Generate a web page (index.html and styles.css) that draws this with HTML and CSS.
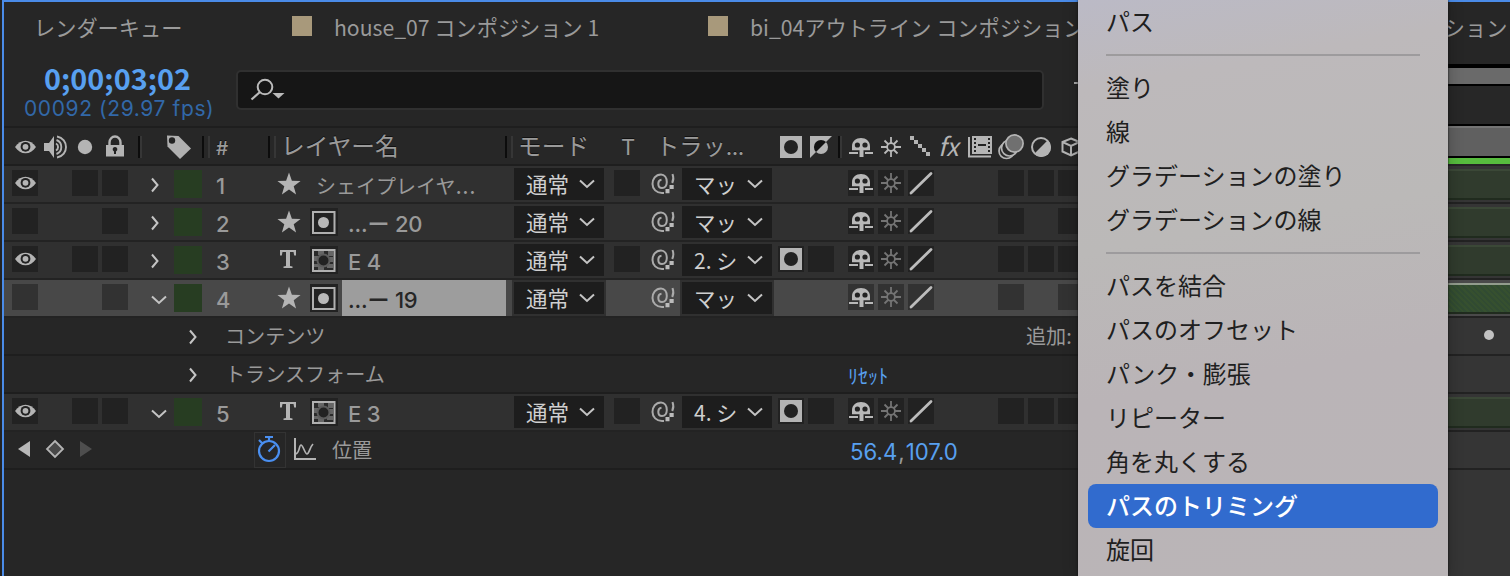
FILE: index.html
```
<!DOCTYPE html>
<html lang="ja">
<head>
  <meta charset="UTF-8" />
  <meta name="viewport" content="width=device-width, initial-scale=1.0" />
  <title>タイムライン</title>
  <link rel="stylesheet" href="styles.css">
</head>
<body>
  <!-- icons -->
  <svg class="defs" width="0" height="0">
    <symbol id="eye" viewBox="0 0 26 26">
      <path d="M3 13C6 8.800 9.500 6.700 13.500 6.700S21 8.800 24 13c-3 4.200-6.500 6.300-10.500 6.300S6 17.200 3 13z" fill="#b4b4b4"/>
      <circle cx="13.500" cy="12.800" r="4.900" fill="#222"/>
      <circle cx="13.500" cy="12.800" r="2.900" fill="#b4b4b4"/>
    </symbol>
    <symbol id="shy" viewBox="0 0 26 26">
      <path d="M4 16.300V12.500C4 7 8 4 13 4s9 3 9 8.500v3.800h-6.500V23h-4v-6.700z" fill="#b8b8b8"/>
      <circle cx="9.400" cy="11" r="2.600" fill="#222"/><circle cx="17" cy="11" r="2.600" fill="#222"/>
      <path d="M1 19h9M17 19h8" stroke="#b8b8b8" stroke-width="2"/>
    </symbol>
    <symbol id="sun" viewBox="0 0 26 26">
      <circle cx="13" cy="13" r="3.900"/>
      <path d="M13 3v6M13 17v6M3 13h6M17 13h6M6.500 6.500l3.500 3.500M16 16l3.500 3.500M19.500 6.500L16 10M10 16l-3.500 3.500"/>
    </symbol>
    <symbol id="slash" viewBox="0 0 26 26">
      <path d="M3 23L23 3.500" stroke="#bcbcbc" stroke-width="2.800" stroke-linecap="round"/>
    </symbol>
    <symbol id="whip" viewBox="0 0 26 26">
      <path d="M11.500 9.800C9.500 10 8.300 11.800 8.300 13.700c0 2.500 1.500 4.300 3.700 4.300 3 0 4.800-2.600 4.800-6C16.800 7.800 14.500 4.500 11 4.500 5.500 4.500 2.500 9.300 2.500 14c0 5 4 9 9.500 9h2M22.500 4c1.200 3 1.100 6-.3 9" fill="none" stroke="#aaa" stroke-width="2"/>
      <path d="M15.500 19h4v4.200h-4zM19.500 15h4.200v4h-4.200z" fill="#bbb"/>
    </symbol>
    <symbol id="right" viewBox="0 0 12 18"><path d="M3 2.500L8.500 9 3 15.500" fill="none" stroke="#c4c4c4" stroke-width="2"/></symbol>
    <symbol id="down" viewBox="0 0 18 12"><path d="M2 2.500L9 9l7-6.500" fill="none" stroke="#c4c4c4" stroke-width="2"/></symbol>
    <symbol id="star" viewBox="0 0 24 24"><path d="M12 .5l2.900 8.200 8.700.2-6.900 5.300 2.400 8.300L12 17.600l-7.100 4.900 2.400-8.300L.4 8.900l8.700-.2z" fill="#b4b4b4"/></symbol>
    <symbol id="text" viewBox="0 0 18 20"><path d="M1 1h16v5.500h-1.800L14.500 3H11v14l2.500.6V19h-9v-1.400L7 17V3H3.500l-.7 3.500H1z" fill="#b4b4b4"/></symbol>
    <symbol id="shape-matte" viewBox="0 0 28 28">
      <rect width="28" height="28" fill="#222"/><rect x="3" y="4" width="21.500" height="21" fill="#222" stroke="#b0b0b0" stroke-width="2"/>
      <circle cx="13.500" cy="14.500" r="5.500" fill="#b8b8b8"/>
    </symbol>
    <symbol id="text-matte" viewBox="0 0 28 28">
      <rect width="28" height="28" fill="#222"/><rect x="3" y="4" width="21.500" height="21" fill="#2a2a2a" stroke="#b0b0b0" stroke-width="2"/>
      <path d="M8 5h6v4H8zM18 5h5v5h-5zM4 10h5v5H4zM18 11h5v5h-5zM8 19h6v5H8zM17 18h6v4h-6zM4 18h5v3H4z" fill="#666"/>
      <circle cx="13.500" cy="14.500" r="6" fill="#222" stroke="#5c5c5c" stroke-width="2"/>
    </symbol>
    <symbol id="matte" viewBox="0 0 26 26"><path d="M2 2h22v22H2z" fill="#b4b4b4"/><circle cx="13" cy="13" r="7" fill="#222"/></symbol>
  </svg>

  <div class="app">
    <div class="tabs">
      <span class="tab queue">レンダーキュー</span>
      <span class="tab comp-1"><i></i>house_07 コンポジション 1</span>
      <span class="tab comp-2"><i></i>bi_04アウトライン コンポジション 1</span>
      <span class="tab comp-3">コンポジション</span>
    </div>

    <div class="main">
      <div class="layers">
        <div class="toolbar">
          <div class="time">
            <b>0;00;03;02</b>
            <span>00092 (29.97 fps)</span>
          </div>
          <div class="search">
            <svg width="36" height="26" viewBox="0 0 36 26"><circle cx="15" cy="9" r="7.300" fill="none" stroke="#bbb" stroke-width="2"/><path d="M10 14L1.500 21.500" stroke="#bbb" stroke-width="2.200"/><path d="M22.500 15h12L28.500 20.500z" fill="#bbb"/></svg>
          </div>
          <div class="flow-icon"></div>
        </div>

        <div class="row head">
          <svg class="icon"><use href="#eye"/></svg>
          <svg class="icon" viewBox="0 0 26 26"><path d="M2 9h5l5-7v22l-5-7H2z" fill="#b4b4b4"/><path d="M14 9.500a4 4 0 0 1 0 7M15 2.500c12 2 12 19 0 21M14.500 6a7.500 7.500 0 0 1 0 14" fill="none" stroke="#b4b4b4" stroke-width="1.900"/></svg>
          <svg class="icon" viewBox="0 0 26 26"><circle cx="13" cy="13" r="7.200" fill="#b4b4b4"/></svg>
          <svg class="icon" viewBox="0 0 26 26"><path d="M7.500 12V8.500a5.500 6 0 0 1 11 0V12" fill="none" stroke="#b4b4b4" stroke-width="2.400"/><path d="M4 11h18v11.500H4z" fill="#b4b4b4"/><path d="M13 13a2.300 2.300 0 0 0-1 4.400V20h2v-2.600A2.300 2.300 0 0 0 13 13z" fill="#222"/></svg>
          <span class="rule"></span>
          <svg class="tag" viewBox="0 0 26 26"><path d="M1 1.500L12.500 2 25 14.500 14 25 1.500 12.500z" fill="#b0b0b0"/><circle cx="6" cy="6.500" r="3.200" fill="#222"/></svg>
          <span class="hash">#</span>
          <span class="label name-label">レイヤー名</span>
          <span class="label mode-label">モード</span>
          <span class="label t-label">T</span>
          <span class="label track-label">トラッ<small>...</small></span>
          <svg class="icon"><use href="#matte"/></svg>
          <svg class="icon" viewBox="0 0 26 26"><path d="M2 2h22L2 24z" fill="#b4b4b4"/><circle cx="13" cy="13" r="7" fill="#b4b4b4"/><path d="M18 8A7 7 0 0 0 8 18z" fill="#111"/></svg>
          <span class="rule short"></span>
          <svg class="icon"><use href="#shy"/></svg>
          <svg class="icon sun bright"><use href="#sun"/></svg>
          <svg class="icon" viewBox="0 0 26 26"><path d="M2 2h4v4H2zM6 6h4v4H6zM10 10h4v4h-4zM14 14h4v4h-4zM18 18h4v4h-4z" fill="#b4b4b4"/></svg>
          <span class="fx">fx</span>
          <svg class="icon" viewBox="0 0 26 26"><path d="M1 3v19.500h22" fill="none" stroke="#b4b4b4" stroke-width="2"/><path d="M4 2h20v18H4z" fill="#b4b4b4"/><path d="M7 4v15M21 4v15" stroke="#222" stroke-width="2" stroke-dasharray="2 2"/><path d="M10 11h8" fill="none" stroke="#222" stroke-width="2"/></svg>
          <svg class="icon" viewBox="0 0 26 26"><g fill="#292929" stroke="#b4b4b4" stroke-width="1.700"><circle cx="8.500" cy="17" r="7.500"/><circle cx="11.500" cy="14" r="8"/><circle cx="16.500" cy="9.500" r="8.600" fill="#707070"/></g></svg>
          <svg class="icon" viewBox="0 0 26 26"><circle cx="13" cy="13" r="9" fill="none" stroke="#b4b4b4" stroke-width="2"/><path d="M19.700 6.300A9.500 9.500 0 1 1 6.300 19.700z" fill="#b4b4b4"/></svg>
          <svg class="icon" viewBox="0 0 26 26"><path d="M13 4.500l8.500 3.500v9.500L13 21.500l-8.500-4V8zM4.500 8l8.500 4 8.500-4M13 12v9.500" fill="none" stroke="#b4b4b4" stroke-width="2"/></svg>
        </div>

        <div class="row">
          <span class="cell"><svg class="icon"><use href="#eye"/></svg></span><span></span><span class="cell"></span><span class="cell"></span>
          <svg class="right"><use href="#right"/></svg><span class="swatch"></span><span class="num">1</span>
          <svg class="star"><use href="#star"/></svg>
          <span class="name wide">シェイプレイヤ<small>...</small></span>
          <span class="select">通常<svg class="down"><use href="#down"/></svg></span>
          <span class="cell"></span><svg class="whip"><use href="#whip"/></svg>
          <span class="select track">マッ<svg class="down"><use href="#down"/></svg></span>
          <span></span><span></span><span></span>
          <span class="cell"><svg class="icon"><use href="#shy"/></svg></span>
          <span class="cell"><svg class="icon sun"><use href="#sun"/></svg></span>
          <span class="cell"><svg class="icon"><use href="#slash"/></svg></span>
          <span></span><span></span><span class="cell"></span><span class="cell"></span><span class="cell"></span>
        </div>

        <div class="row">
          <span class="cell"></span><span></span><span></span><span class="cell"></span>
          <svg class="right"><use href="#right"/></svg><span class="swatch"></span><span class="num">2</span>
          <svg class="star"><use href="#star"/></svg><svg class="matte"><use href="#shape-matte"/></svg>
          <span class="name">...ー 20</span>
          <span class="select">通常<svg class="down"><use href="#down"/></svg></span>
          <span></span><svg class="whip"><use href="#whip"/></svg>
          <span class="select track">マッ<svg class="down"><use href="#down"/></svg></span>
          <span></span><span></span><span></span>
          <span class="cell"><svg class="icon"><use href="#shy"/></svg></span>
          <span class="cell"><svg class="icon sun"><use href="#sun"/></svg></span>
          <span class="cell"><svg class="icon"><use href="#slash"/></svg></span>
          <span></span><span></span><span class="cell"></span><span></span><span class="cell"></span>
        </div>

        <div class="row">
          <span class="cell"><svg class="icon"><use href="#eye"/></svg></span><span></span><span class="cell"></span><span class="cell"></span>
          <svg class="right"><use href="#right"/></svg><span class="swatch"></span><span class="num">3</span>
          <svg class="type"><use href="#text"/></svg><svg class="matte"><use href="#text-matte"/></svg>
          <span class="name">E 4</span>
          <span class="select">通常<svg class="down"><use href="#down"/></svg></span>
          <span class="cell"></span><svg class="whip"><use href="#whip"/></svg>
          <span class="select linked">2. シ<svg class="down"><use href="#down"/></svg></span>
          <span class="cell"><svg class="icon"><use href="#matte"/></svg></span><span class="cell"></span><span></span>
          <span class="cell"><svg class="icon"><use href="#shy"/></svg></span>
          <span class="cell"><svg class="icon sun"><use href="#sun"/></svg></span>
          <span class="cell"><svg class="icon"><use href="#slash"/></svg></span>
          <span></span><span></span><span class="cell"></span><span class="cell"></span><span class="cell"></span>
        </div>

        <div class="row selected">
          <span class="cell"></span><span></span><span></span><span class="cell"></span>
          <svg class="down open"><use href="#down"/></svg><span class="swatch"></span><span class="num">4</span>
          <svg class="star"><use href="#star"/></svg><svg class="matte"><use href="#shape-matte"/></svg>
          <span class="name">...ー 19</span>
          <span class="select">通常<svg class="down"><use href="#down"/></svg></span>
          <span></span><svg class="whip"><use href="#whip"/></svg>
          <span class="select track">マッ<svg class="down"><use href="#down"/></svg></span>
          <span></span><span></span><span></span>
          <span class="cell"><svg class="icon"><use href="#shy"/></svg></span>
          <span class="cell"><svg class="icon sun"><use href="#sun"/></svg></span>
          <span class="cell"><svg class="icon"><use href="#slash"/></svg></span>
          <span></span><span></span><span class="cell"></span><span></span><span class="cell"></span>
        </div>

        <div class="prop">
          <svg class="right"><use href="#right"/></svg><span class="prop-name">コンテンツ</span><span class="add">追加:</span>
        </div>
        <div class="prop">
          <svg class="right"><use href="#right"/></svg><span class="prop-name">トランスフォーム</span><span class="reset">ﾘｾｯﾄ</span>
        </div>

        <div class="row">
          <span class="cell"><svg class="icon"><use href="#eye"/></svg></span><span></span><span class="cell"></span><span class="cell"></span>
          <svg class="down open"><use href="#down"/></svg><span class="swatch"></span><span class="num">5</span>
          <svg class="type"><use href="#text"/></svg><svg class="matte"><use href="#text-matte"/></svg>
          <span class="name">E 3</span>
          <span class="select">通常<svg class="down"><use href="#down"/></svg></span>
          <span class="cell"></span><svg class="whip"><use href="#whip"/></svg>
          <span class="select linked">4. シ<svg class="down"><use href="#down"/></svg></span>
          <span class="cell"><svg class="icon"><use href="#matte"/></svg></span><span class="cell"></span><span></span>
          <span class="cell"><svg class="icon"><use href="#shy"/></svg></span>
          <span class="cell"><svg class="icon sun"><use href="#sun"/></svg></span>
          <span class="cell"><svg class="icon"><use href="#slash"/></svg></span>
          <span></span><span></span><span class="cell"></span><span class="cell"></span><span class="cell"></span>
        </div>

        <div class="prop keys">
          <svg class="keynav" viewBox="0 0 76 20"><path d="M12 2v16L0 10z" fill="#b8b8b8"/><path d="M37 2l8 8-8 8-8-8z" fill="#484848" stroke="#b4b4b4" stroke-width="1.800"/><path d="M62 2v16l12-8z" fill="#4e4e4e"/></svg>
          <span class="watch"><svg width="26" height="30" viewBox="0 0 26 30" fill="none" stroke="#4a8ff0" stroke-width="2.200"><circle cx="12" cy="16" r="10"/><path d="M8 2h8M12 2v4M11.500 16.500L18 10M2 5l4 4"/></svg></span>
          <svg class="graph" viewBox="0 0 24 24" fill="none" stroke="#b4b4b4"><path d="M2 1v21h21" stroke-width="2"/><path d="M3 17c4-2 3-9 5-9s4 9 6 9 3-7 6-10" stroke-width="1.700"/></svg>
          <span class="prop-name">位置</span>
          <span class="value">56.4<em>,</em>107.0</span>
        </div>
      </div>

      <div class="timeline">
        <div class="navigator"></div>
        <div class="ruler"></div>
        <div class="work-area"></div>
        <div class="cached"></div>
        <div class="track-row"><div class="bar"></div></div>
        <div class="track-row"><div class="bar"></div></div>
        <div class="track-row"><div class="bar"></div></div>
        <div class="track-row active"><div class="bar"></div></div>
        <div class="track-row"><div class="dot"></div></div>
        <div class="track-row"></div>
        <div class="track-row"><div class="bar"></div></div>
        <div class="track-row"></div>
      </div>
    </div>
  </div>

  <div class="menu">
    <div class="item">パス</div>
    <hr>
    <div class="item">塗り</div>
    <div class="item">線</div>
    <div class="item">グラデーションの塗り</div>
    <div class="item">グラデーションの線</div>
    <hr>
    <div class="item">パスを結合</div>
    <div class="item">パスのオフセット</div>
    <div class="item">パンク・膨張</div>
    <div class="item">リピーター</div>
    <div class="item">角を丸くする</div>
    <div class="item current">パスのトリミング</div>
    <div class="item">旋回</div>
  </div>
</body>
</html>
```
FILE: styles.css
```
* {
  box-sizing: border-box;
}
body {
  margin: 0;
  height: 576px;
  overflow: hidden;
  background: #262626;
  color: #9a9a9a;
  font-family: Inter, "Noto Sans CJK JP", sans-serif;
  white-space: nowrap;
}
svg {
  display: block;
}
.defs {
  position: absolute;
}
.app {
  height: 576px;
  margin-left: 2px;
  border-left: 2px solid #4a8be8;
  border-top: 2px solid #4a8be8;
  box-shadow: -2px 0 0 #222;
}

/* tabs */
.tabs {
  display: flex;
  height: 62px;
  padding-left: 30px;
  font-family: "Noto Sans CJK JP", sans-serif;
  font-size: 21.200px;
  line-height: 50px;
  overflow: hidden;
}
.tab {
  display: flex;
  flex: none;
}
.tab i {
  width: 20px;
  height: 20px;
  margin: 14px 22px 0 0;
  background: #a8997b;
}
.queue {
  width: 258px;
}
.comp-1 {
  width: 416px;
}
.comp-2 {
  width: 651px;
}

.main {
  display: flex;
  height: 512px;
}
.layers {
  flex: none;
  width: 1096px;
  overflow: hidden;
}

/* time and search */
.toolbar {
  display: flex;
  height: 64px;
  border-bottom: 2px solid #1e1e1e;
}
.time {
  width: 232px;
  margin-top: -10px;
  padding-left: 20px;
}
.time b {
  display: block;
  padding-left: 20px;
  height: 41px;
  font-family: "Noto Sans CJK JP", sans-serif;
  font-size: 28.800px;
  line-height: 48px;
  color: #58a0f0;
}
.time span {
  display: block;
  font-size: 21px;
  line-height: 28px;
  letter-spacing: 0.600px;
  color: #3268a8;
}
.search {
  width: 808px;
  height: 40px;
  margin-top: 6px;
  padding: 6px 12px;
  border: 2px solid #303030;
  border-radius: 5px;
  background: #161616;
}
.flow-icon {
  width: 8px;
  height: 2px;
  margin: 18px 0 0 30px;
  background: #aaa;
}

/* layer rows */
.row {
  display: grid;
  grid-template-columns: 30px 30px 30px 30px 42px 42px 57px 37px 32px 172px 100px 30px 38px 96px 30px 30px 10px repeat(8, 30px);
  height: 38px;
  padding-left: 8px;
  background: #303030;
  border-bottom: 2px solid #232323;
}
.icon {
  width: 26px;
  height: 26px;
}
.cell {
  width: 26px;
  height: 26px;
  margin-top: 4px;
  background: #222;
}
.sun {
  fill: none;
  stroke: #747474;
  stroke-width: 1.800px;
}
.sun.bright {
  stroke: #b8b8b8;
}
.right {
  width: 12px;
  height: 18px;
  margin: 10px 0 0 17px;
}
.down {
  width: 18px;
  height: 12px;
}
.down.open {
  margin: 14px 0 0 18px;
}
.swatch {
  width: 28px;
  height: 28px;
  margin-top: 4px;
  background: #273d22;
}
.num {
  font-size: 22px;
  font-weight: 500;
  line-height: 41px;
}
.star {
  width: 24px;
  height: 24px;
  margin: 6px 0 0 4px;
}
.type {
  width: 18px;
  height: 20px;
  margin: 7px 0 0 6px;
}
.matte {
  width: 28px;
  height: 28px;
  margin-top: 4px;
}
.name {
  height: 36px;
  margin-right: 8px;
  padding-left: 6px;
  font-size: 22px;
  font-weight: 500;
  letter-spacing: -0.200px;
  line-height: 41px;
  overflow: hidden;
}
.name.wide {
  grid-column: span 2;
  font-size: 20px;
  font-weight: 400;
  letter-spacing: 0;
}
.name small {
  font-size: 22px;
  letter-spacing: 0.600px;
}
.select {
  display: flex;
  align-items: center;
  justify-content: space-between;
  width: 90px;
  height: 32px;
  margin-top: 2px;
  padding: 0 8px 0 12px;
  background: #1d1d1d;
  color: #cfcfcf;
  font-family: "Noto Sans CJK JP", sans-serif;
  font-size: 21.500px;
  line-height: 28px;
}
.select .down {
  margin-bottom: 1px;
}
.linked {
  font-size: 21px;
}
.whip {
  width: 26px;
  height: 26px;
  margin: 4px 0 0 6px;
}
.selected {
  background: #484848;
}
.selected .cell {
  background: #323232;
}
.selected .name {
  background: #9d9d9d;
  color: #262626;
}
.selected .select {
  box-shadow: 0 0 0 2px #303030;
}

/* column headings */
.head {
  background: #272727;
  border-color: #1e1e1e;
}
.head .icon {
  margin-top: 6px;
}
.rule {
  width: 4px;
  height: 22px;
  margin: 8px 0 0 6px;
  border-left: 2px solid #0c0c0c;
  border-right: 2px solid #363636;
}
.rule.short {
  margin-left: 0;
}
.tag {
  width: 26px;
  height: 26px;
  margin: 6px 0 0 -8px;
}
.hash,
.label {
  position: relative;
  font-size: 22px;
  line-height: 38px;
  text-shadow: 0 -1px #111;
}
.hash {
  padding-left: -2px;
  font-size: 19px;
  font-weight: 500;
  line-height: 41px;
}
.hash::before,
.name-label::before,
.mode-label::before {
  content: "";
  position: absolute;
  left: -14px;
  top: 8px;
  width: 4px;
  height: 22px;
  border-left: 2px solid #0c0c0c;
  border-right: 2px solid #363636;
}
.name-label {
  grid-column: span 3;
  padding-left: 8px;
  font-size: 23.700px;
}
.name-label::before {
  left: -5px;
}
.mode-label {
  padding-left: 4px;
  font-size: 23.700px;
}
.mode-label::before {
  left: -9px;
}
.t-label {
  padding-left: 7px;
}
.track-label {
  grid-column: span 2;
  padding-left: 12px;
  font-size: 23.300px;
}
.track-label small {
  font-size: 18px;
  font-weight: 700;
}
.fx {
  font-family: "Noto Sans CJK JP", sans-serif;
  font-size: 25px;
  font-style: italic;
  line-height: 34px;
  color: #b4b4b4;
}

/* property rows */
.prop {
  display: flex;
  height: 38px;
  padding-left: 166px;
  background: #262626;
  border-bottom: 2px solid #1e1e1e;
  font-family: "Noto Sans CJK JP", sans-serif;
  font-size: 20.100px;
  line-height: 36px;
}
.prop-name {
  width: 200px;
  margin-left: 26px;
}
.add {
  margin-left: 601px;
}
.reset {
  margin-left: 423px;
  line-height: 39px;
  color: #58a0f0;
}
.keys {
  padding-left: 14px;
}
.keynav {
  width: 76px;
  height: 20px;
  margin-top: 7px;
}
.watch {
  width: 32px;
  height: 36px;
  margin-left: 160px;
  padding: 2px;
  border: 1px solid #333;
}
.graph {
  width: 24px;
  height: 24px;
  margin: 5px 0 0 7px;
}
.keys .prop-name {
  margin-left: 15px;
}
.value {
  margin-left: 318px;
  font-family: Inter, sans-serif;
  font-size: 22.200px;
  line-height: 40px;
  color: #58a0f0;
}
.value em {
  font-style: normal;
  color: #999;
  margin: 0 1px;
}

/* timeline */
.timeline {
  flex: 1;
  background: #353535;
}
.navigator {
  height: 22px;
  border-top: 4px solid #000;
  border-bottom: 2px solid #000;
  background: #6a6a6a;
}
.ruler {
  height: 40px;
  border-bottom: 2px solid #000;
  background: #272727;
}
.work-area {
  height: 32px;
  border-top: 2px solid #747474;
  border-bottom: 2px solid #000;
  background: #606060;
}
.cached {
  height: 8px;
  border-bottom: 2px solid #252525;
  background: #57bd3e;
}
.track-row {
  height: 38px;
  padding-top: 3px;
  border-bottom: 2px solid #222;
}
.bar {
  height: 31px;
  border-top: 2px solid #3b4837;
  border-bottom: 2px solid #202b1e;
  background: #303b2d;
}
.active {
  background: #4a4a4a;
}
.active .bar {
  border-top-color: #929c8d;
  background: repeating-linear-gradient(45deg, #36502f 0 2px, #314b32 2px 4px);
}
.dot {
  width: 10px;
  height: 10px;
  margin: 9px 0 0 384px;
  border-radius: 50%;
  background: #c2c2c2;
}

/* popup menu */
.menu {
  position: absolute;
  left: 1078px;
  top: 0;
  width: 370px;
  height: 576px;
  padding: 0 10px;
  overflow: hidden;
  background: linear-gradient(170deg, #bbbac6 0, #bdb9bb 90px, #bbb9b8 250px, #bab4b7 400px, #bab5b7 100%);
  box-shadow: 0 0 2px #111, 0 0 14px rgba(0, 0, 0, 0.250);
  color: #202020;
  font-family: "Noto Sans CJK JP", sans-serif;
  font-size: 24px;
}
.item {
  height: 44px;
  padding-left: 18px;
  line-height: 42px;
}
.menu hr {
  height: 2px;
  margin: 10px 18px;
  border: 0;
  background: #9d9b9d;
}
.current {
  border-radius: 8px;
  background: #316bce;
  color: #fff;
  font-weight: 500;
}
```
